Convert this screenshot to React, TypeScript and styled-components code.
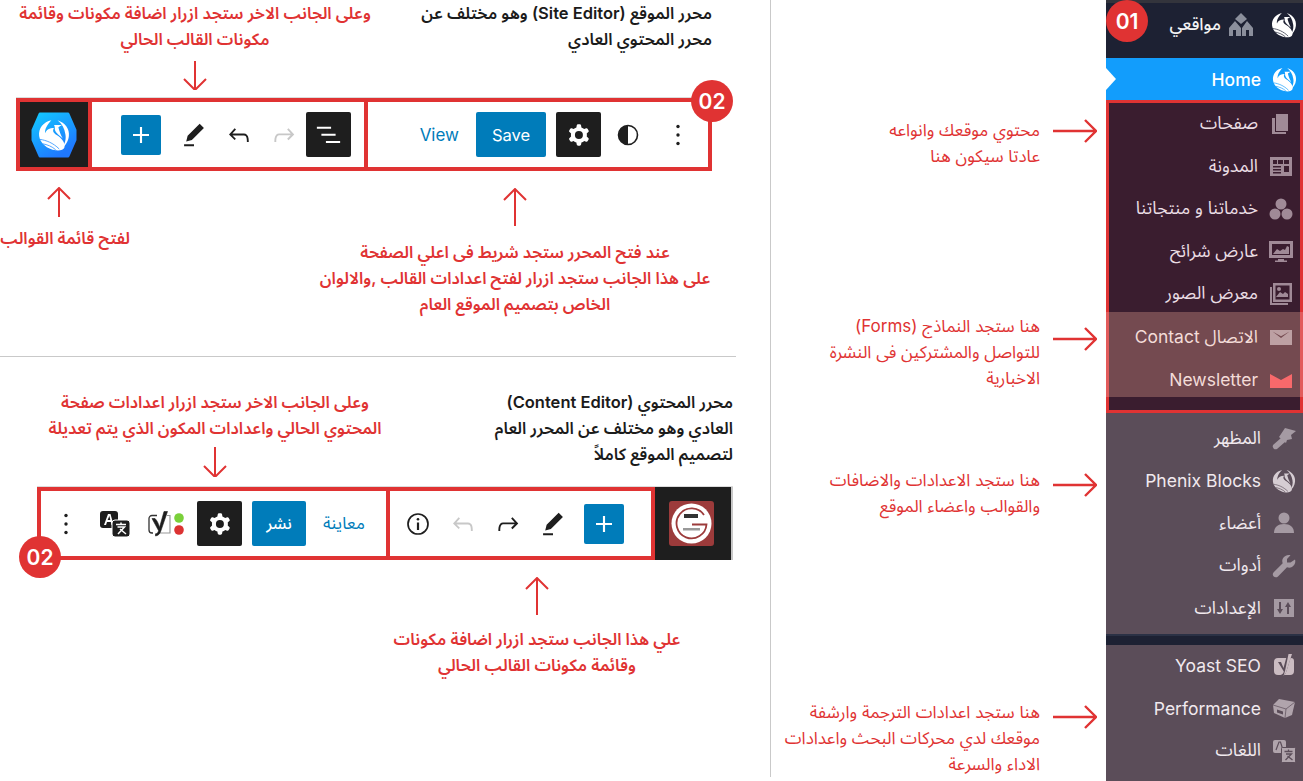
import React, { FC } from "react";
import styled, { createGlobalStyle } from "styled-components";

const RED = "#e03333";
const BLUE = "#007cba";
const DARK = "#1e1e1e";
const FONT = `"Inter", "Noto Sans Arabic", "DejaVu Sans", sans-serif`;

const GlobalStyle = createGlobalStyle`
  html, body {
    margin: 0;
    padding: 0;
    background: #fff;
  }
  body {
    font-family: ${FONT};
  }
`;

/* drawings */

const WpIcon: FC<{ d: string; color?: string; size?: number }> = ({ d, color = DARK, size = 30 }) => (
  <svg width={size} height={size} viewBox="0 0 24 24" fill={color} fillRule="evenodd">
    <path d={d} />
  </svg>
);

const PEN = "m19 7-3-3-8.5 8.5-1 4 4-1L19 7Zm-7 11.5H5V20h7v-1.5Z";
const UNDO =
  "M18.3 11.7c-.6-.6-1.4-.9-2.3-.9H6.7l2.9-3.3-1.1-1-4.5 5L8.5 16l1-1-2.7-2.7H16c.5 0 .9.2 1.3.5 1 1 1 3.4 1 4.5v.3h1.5v-.2c0-1.5 0-4.3-1.5-5.7z";
const REDO =
  "M15.6 6.5l-1.1 1 2.9 3.3H8c-.9 0-1.7.3-2.3.9-1.4 1.5-1.4 4.2-1.4 5.6v.2h1.5v-.3c0-1.1 0-3.5 1-4.5.3-.3.7-.5 1.3-.5h9.2L14.5 15l1.1 1.1 4.6-4.6-4.6-5z";
const LIST = "M3 6h11v1.5H3V6Zm3.5 5.5h11V13h-11v-1.5ZM21 17H10v1.5h11V17Z";
const PLUS = "M18 11.2h-5.2V6h-1.6v5.2H6v1.6h5.2V18h1.6v-5.2H18z";
const COG =
  "M10.289 4.836A1 1 0 0 1 11.275 4h1.306a1 1 0 0 1 .987.836l.244 1.466c.787.26 1.503.679 2.108 1.218l1.393-.522a1 1 0 0 1 1.216.437l.653 1.13a1 1 0 0 1-.23 1.273l-1.148.944a6.025 6.025 0 0 1 0 2.435l1.149.946a1 1 0 0 1 .23 1.272l-.653 1.13a1 1 0 0 1-1.216.437l-1.394-.522c-.605.54-1.32.958-2.108 1.218l-.244 1.466a1 1 0 0 1-.987.836h-1.306a1 1 0 0 1-.986-.836l-.244-1.466a5.995 5.995 0 0 1-2.108-1.218l-1.394.522a1 1 0 0 1-1.217-.436l-.653-1.131a1 1 0 0 1 .23-1.272l1.149-.946a6.026 6.026 0 0 1 0-2.435l-1.148-.944a1 1 0 0 1-.23-1.272l.653-1.131a1 1 0 0 1 1.217-.437l1.393.522a5.994 5.994 0 0 1 2.108-1.218l.244-1.466ZM14.929 12a3 3 0 1 1-6 0 3 3 0 0 1 6 0Z";

const MoreDots: FC = () => (
  <svg width="30" height="30" viewBox="0 0 30 30" fill={DARK}>
    <circle cx="15" cy="6.500" r="1.700" />
    <circle cx="15" cy="15" r="1.700" />
    <circle cx="15" cy="23.500" r="1.700" />
  </svg>
);

const HalfCircle: FC = () => (
  <svg width="24" height="24" viewBox="0 0 24 24">
    <circle cx="12" cy="12" r="9.500" fill="#fff" stroke={DARK} strokeWidth="1.600" />
    <path d="M12 2.500a9.500 9.500 0 0 0 0 19Z" fill={DARK} />
  </svg>
);

const InfoIcon: FC = () => (
  <svg width="24" height="24" viewBox="0 0 24 24" fill="none" stroke={DARK}>
    <circle cx="12" cy="12" r="10" strokeWidth="1.700" />
    <path d="M12 10.500V18" strokeWidth="2.200" />
    <circle cx="12" cy="7.200" r="1.300" fill={DARK} stroke="none" />
  </svg>
);

const TranslateDark: FC = () => (
  <svg width="32" height="28" viewBox="0 0 32 28">
    <rect x="1" y="1" width="18" height="17" rx="3" fill={DARK} />
    <path d="M5 15 9 4h2.500l3 11h-2l-.7-3H8l-1 3Zm3.600-5h2.700l-.9-4Z" fill="#fff" />
    <rect x="13" y="10" width="18" height="17" rx="3" fill={DARK} stroke="#fff" />
    <path d="M17 14.500h10M22 12.500v2M18.500 17h7L19 24M21 19l6 5" stroke="#fff" strokeWidth="1.500" fill="none" />
  </svg>
);

const YoastStatus: FC = () => (
  <svg width="38" height="26" viewBox="0 0 38 26" fill="none">
    <path d="M9 4.500H4a3 3 0 0 0-3 3V19a3 3 0 0 0 3 3h1" stroke="#333" strokeWidth="1.300" />
    <path d="M19 4.500h3V22H11" stroke="#999" strokeWidth="1.200" />
    <path
      d="M7 7.500c2 2 3.500 5 4.500 9L16 .5h3.500L12.800 20c-.9 3-2.500 4.500-5.300 5v-2.200c2-.3 2.800-1.500 3-3.300L4 7.500Z"
      fill={DARK}
      stroke={DARK}
      strokeWidth="0.600"
    />
    <circle cx="31" cy="7" r="4.800" fill="#7ad03a" />
    <circle cx="31" cy="19" r="4.800" fill="#dc3232" />
  </svg>
);

const PhoenixMark: FC<{ size: number; color?: string; cut?: string; x?: number; y?: number }> = ({
  size,
  color = "#fff",
  cut = "#1d2133",
  x,
  y,
}) => (
  <svg x={x} y={y} width={size} height={size} viewBox="0 0 40 40">
    <path
      d="M17 3C8 5 2 12 3 21c1 8 9 15 19 16.500 5 .5 9-.5 10-3.500 1-6-4-11-9-14-4-2.500-5-5-3-8-5 0-9 2-10 6-1-4 2-10 7-15Z"
      fill={color}
    />
    <path d="M24 3c9 3 14 10 13 18-.5 6-4 11-9 15.500 5-6.500 6-12.500 5-17.500-1-7-4-12-9-16Z" fill={color} />
    <path d="M20 8.500h9l-4 2.500c1 4 2 7 5 13-3-3-8-6-9-10 0-2 0-4-1-5.500Z" fill={color} />
    <path d="M4 25c7 1 15 4 22 11M7 30c5 1 11 3 15 7" stroke={cut} strokeWidth="1" fill="none" />
  </svg>
);

const HexLogo: FC = () => (
  <svg width="46" height="46" viewBox="0 0 46 46">
    <defs>
      <linearGradient id="hexFill" x1="0" y1="0" x2="0.6" y2="1">
        <stop offset="0" stopColor="#12c9ff" />
        <stop offset="1" stopColor="#1f78ff" />
      </linearGradient>
    </defs>
    <path
      d="M9 2h28l7 16v10l-7 16H9L2 28V18Z"
      fill="url(#hexFill)"
      stroke="url(#hexFill)"
      strokeWidth="3"
      strokeLinejoin="round"
    />
    <PhoenixMark size={35} x={5.500} y={5.500} cut="#3f9cff" />
  </svg>
);

const BrandBadge: FC = () => (
  <svg width="45" height="45" viewBox="0 0 45 45">
    <rect width="45" height="45" rx="3" fill="#9c3b3b" />
    <circle cx="22.500" cy="22.500" r="20" fill="#fff" />
    <path d="M35 14a15 15 0 1 0 2.500 9.500H23" fill="none" stroke="#9c3b3b" strokeWidth="1.800" />
    <rect x="15" y="13" width="14" height="4" fill="#333" />
    <rect x="14" y="27" width="17" height="2.500" fill="#999" />
  </svg>
);

const Arrow: FC<{ dir: "up" | "down" | "right"; length: number }> = ({ dir, length }) => {
  if (dir === "right") {
    return (
      <svg width={length} height="24" viewBox={`0 0 ${length} 24`} fill="none" stroke={RED} strokeWidth="2.400">
        <path d={`M0 12H${length - 1}M${length - 12} 1l11 11-11 11`} />
      </svg>
    );
  }
  const path =
    dir === "down"
      ? `M12 0V${length - 1}M1 ${length - 11}l11 11 11-11`
      : `M12 ${length}V1M1 12 12 1l11 11`;
  return (
    <svg width="24" height={length} viewBox={`0 0 24 ${length}`} fill="none" stroke={RED} strokeWidth="2">
      <path d={path} />
    </svg>
  );
};

/* sidebar icons */

const Glyph: FC<{ color: string; children: React.ReactNode }> = ({ color, children }) => (
  <svg width="24" height="24" viewBox="0 0 24 24" fill={color}>
    {children}
  </svg>
);

const icons: Record<string, (c: string) => React.ReactNode> = {
  pages: (c) => (
    <Glyph color={c}>
      <path d="M7 2h12v17H7z" />
      <path d="M3 6h3v14h11v2H3z" />
    </Glyph>
  ),
  blog: (c) => (
    <Glyph color={c}>
      <path
        fillRule="evenodd"
        d="M1 3h22v19H1ZM4 6v4h4V6Zm5 0v4h5V6Zm6 0v4h5V6ZM4 12v1.500h8V12Zm0 3v1.500h8V15Zm0 3v1.500h8V18Zm11-6v6h5v-6Z"
      />
    </Glyph>
  ),
  services: (c) => (
    <Glyph color={c}>
      <circle cx="12" cy="7" r="5.500" />
      <circle cx="6" cy="17" r="5.500" />
      <circle cx="18" cy="17" r="5.500" />
    </Glyph>
  ),
  slider: (c) => (
    <Glyph color={c}>
      <path fillRule="evenodd" d="M0 2h24v17H0Zm3 3v11h18V5ZM9 20h6v1.500h3V23H6v-1.500h3Z" />
      <path d="M4 15l4-5 3 2 3-2 2 1 2-4 2 1v7Z" />
    </Glyph>
  ),
  gallery: (c) => (
    <Glyph color={c}>
      <path fillRule="evenodd" d="M4 1h19v19H4Zm2.500 2.500v14h14v-14Z" />
      <path d="M7 15l4-5 3 2 2-2 3 2v3Z" />
      <circle cx="10" cy="7" r="2" />
      <path d="M1 5h2v16h16v2H1Z" />
    </Glyph>
  ),
  mail: (c) => (
    <Glyph color={c}>
      <path fillRule="evenodd" d="M1 5h22v15H1Zm2.500 1.500L12 13l8.500-6.500L12 11.200Z" />
    </Glyph>
  ),
  letter: (c) => (
    <Glyph color={c}>
      <path d="M1 6l11 6 11-6v14H1Z" />
    </Glyph>
  ),
  brush: (c) => (
    <Glyph color={c}>
      <path d="M13 2l11 3-5 4 1 4-5 1-1 3-7-6ZM9 12l4 4-8 7a3 3 0 0 1-4-4Z" />
    </Glyph>
  ),
  user: (c) => (
    <Glyph color={c}>
      <circle cx="12" cy="7" r="5.500" />
      <path d="M2 22c0-6 4-9 10-9s10 3 10 9Z" />
    </Glyph>
  ),
  wrench: (c) => (
    <Glyph color={c}>
      <path d="M23 5.500c1 3-.5 6-3 7.500-2 1-3.500.8-5 .3L6 22.500c-1.500 1.300-3.500 1-4.500-.3-1-1.200-1-3 .2-4l9-9c-.6-1.500-.7-3.200.3-5C12.300 2 15.300.5 18.500 1.200L15 5v3.500h3.500Z" />
    </Glyph>
  ),
  settings: (c) => (
    <Glyph color={c}>
      <path fillRule="evenodd" d="M2 3h20v18H2Zm5 3v7H5l3 5 3-5H9V6Zm8 12h2v-7h2l-3-5-3 5h2Z" />
    </Glyph>
  ),
  yoast: (c) => (
    <Glyph color={c}>
      <path d="M6 4h13a3 3 0 0 1 3 3v10a4 4 0 0 1-4 4H6a4 4 0 0 1-4-4V8a4 4 0 0 1 4-4Z" />
      <path
        d="M6 8l3 0 2.500 6L15 1h4.500l-5 16c-.8 3-2.500 5.500-6 6.500v-2.500c2-.5 3-1.500 3.300-3.500Z"
        fill="#5b4d59"
      />
      <path d="M16.500 0H20l-5.500 17c-.5 2-1.500 3.500-3 5l1.500-5Z" fill={c} />
    </Glyph>
  ),
  performance: (c) => (
    <Glyph color={c}>
      <path d="M7 3l16 3-3 13-7 3-11-5L1 9Z" />
      <path d="M1 9l13 4 9-7M14 13l-1 9" stroke="#5b4d59" strokeWidth="0.700" fill="none" />
      <path d="M5 13.500l6 2v3l-6-2Z" fill="#5b4d59" />
    </Glyph>
  ),
  languages: (c) => (
    <Glyph color={c}>
      <rect x="1" y="1" width="13" height="13" rx="2" />
      <path d="M4 11l3-8h1.500l2.500 8" stroke="#5b4d59" strokeWidth="1.200" fill="none" />
      <rect x="9.500" y="8.500" width="14" height="15" rx="1" stroke="#5b4d59" strokeWidth="1" />
      <path d="M12.500 12.500h8M16.500 10.500v2M14 15h5.500L13.500 21M15.500 17l5 4" stroke="#5b4d59" strokeWidth="1.300" fill="none" />
    </Glyph>
  ),
  houses: (c) => (
    <Glyph color={c}>
      <path d="M12 0l6 6-6 5-6-5Z" />
      <path fillRule="evenodd" d="M6 8l6 7v8H0v-8Zm12 0l6 7v8H13v-8ZM4 17v6h3v-6Zm13 0v6h3v-6Z" />
    </Glyph>
  ),
};

interface MenuItem {
  label: string;
  icon: string;
  tint?: string;
}

const sidebarGroups: Record<string, MenuItem[]> = {
  content: [
    { label: "صفحات", icon: "pages" },
    { label: "المدونة", icon: "blog" },
    { label: "خدماتنا و منتجاتنا", icon: "services" },
    { label: "عارض شرائح", icon: "slider" },
    { label: "معرض الصور", icon: "gallery" },
  ],
  forms: [
    { label: "الاتصال Contact", icon: "mail", tint: "#bda0a3" },
    { label: "Newsletter", icon: "letter", tint: "#f8696b" },
  ],
  admin: [
    { label: "المظهر", icon: "brush" },
    { label: "Phenix Blocks", icon: "phenix" },
    { label: "أعضاء", icon: "user" },
    { label: "أدوات", icon: "wrench" },
    { label: "الإعدادات", icon: "settings" },
  ],
  extras: [
    { label: "Yoast SEO", icon: "yoast", tint: "#cbbcc2" },
    { label: "Performance", icon: "performance" },
    { label: "اللغات", icon: "languages" },
  ],
};

const MenuList: FC<{ items: MenuItem[]; iconColor: string; textColor: string }> = ({
  items,
  iconColor,
  textColor,
}) => (
  <>
    {items.map((item) => (
      <MenuRow key={item.label} $color={textColor}>
        <bdi>{item.label}</bdi>
        <IconSlot>
          {item.icon === "phenix" ? (
            <PhoenixMark size={26} color="#d6cdd3" cut="#5b4d59" />
          ) : (
            icons[item.icon](item.tint ?? iconColor)
          )}
        </IconSlot>
      </MenuRow>
    ))}
  </>
);

const App: FC = () => (
  <Page>
    <GlobalStyle />
    <GuidePanel>
      <TopNotes>
        <ArrowNote $width={352} $left={19}>
          <Note $tone="red">
            <Line>وعلى الجانب الاخر ستجد ازرار اضافة مكونات وقائمة</Line>
            <Line>مكونات القالب الحالي</Line>
          </Note>
          <ArrowGap $top={9}>
            <Arrow dir="down" length={29} />
          </ArrowGap>
        </ArrowNote>
        <SideNote $right={58}>
          <Note $tone="ink" $align="right">
            <Line>محرر الموقع (Site Editor) وهو مختلف عن</Line>
            <Line>محرر المحتوي العادي</Line>
          </Note>
        </SideNote>
      </TopNotes>

      <EditorBar $left={16} $width={696}>
        <LogoSegment $width={76}>
          <HexLogo />
        </LogoSegment>
        <BarSegment $width={280} $left={-4} $padLeft={29}>
          <AddButton>
            <WpIcon d={PLUS} color="#fff" size={32} />
          </AddButton>
          <ToolButton>
            <WpIcon d={PEN} size={34} />
          </ToolButton>
          <ToolButton>
            <WpIcon d={UNDO} />
          </ToolButton>
          <ToolButton>
            <WpIcon d={REDO} color="#c8c8c8" />
          </ToolButton>
          <DarkButton>
            <WpIcon d={LIST} color="#fff" size={31} />
          </DarkButton>
        </BarSegment>
        <BarSegment $width={348} $left={-4} $end>
          <TextLink>View</TextLink>
          <SaveButton>Save</SaveButton>
          <DarkButton $left={10}>
            <WpIcon d={COG} color="#fff" size={32} />
          </DarkButton>
          <ToolButton $left={4}>
            <HalfCircle />
          </ToolButton>
          <ToolButton $left={5}>
            <MoreDots />
          </ToolButton>
        </BarSegment>
        <StepBadge $x={675} $y={-18}>02</StepBadge>
      </EditorBar>

      <BelowBar $height={185}>
        <ArrowNote $width={130}>
          <ArrowGap $top={16} $right={12}>
            <Arrow dir="up" length={30} />
          </ArrowGap>
          <Note $tone="red" $top={8}>
            <Line>لفتح قائمة القوالب</Line>
          </Note>
        </ArrowNote>
        <ArrowNote $width={420} $left={175}>
          <ArrowGap $top={17}>
            <Arrow dir="up" length={38} />
          </ArrowGap>
          <Note $tone="red" $top={13}>
            <Line>عند فتح المحرر ستجد شريط فى اعلي الصفحة</Line>
            <Line>على هذا الجانب ستجد ازرار لفتح اعدادات القالب ,والالوان</Line>
            <Line>الخاص بتصميم الموقع العام</Line>
          </Note>
        </ArrowNote>
      </BelowBar>

      <SectionRule />

      <LowerNotes>
        <ArrowNote $width={380} $left={25}>
          <Note $tone="red">
            <Line>وعلى الجانب الاخر ستجد ازرار اعدادات صفحة</Line>
            <Line>المحتوي الحالي واعدادات المكون الذي يتم تعديلة</Line>
          </Note>
          <ArrowGap $top={6}>
            <Arrow dir="down" length={30} />
          </ArrowGap>
        </ArrowNote>
        <SideNote $right={37}>
          <Note $tone="ink" $align="right">
            <Line>محرر المحتوي (Content Editor)</Line>
            <Line>العادي وهو مختلف عن المحرر العام</Line>
            <Line>لتصميم الموقع كاملاً</Line>
          </Note>
        </SideNote>
      </LowerNotes>

      <EditorBar $left={37} $width={696}>
        <BarSegment $width={353} $padLeft={2}>
          <ToolButton>
            <MoreDots />
          </ToolButton>
          <ToolButton $left={4}>
            <TranslateDark />
          </ToolButton>
          <YoastSlot>
            <YoastStatus />
          </YoastSlot>
          <DarkButton $left={8}>
            <WpIcon d={COG} color="#fff" size={32} />
          </DarkButton>
          <PublishButton>نشر</PublishButton>
          <ArabicLink>معاينة</ArabicLink>
        </BarSegment>
        <BarSegment $width={269} $left={-4} $padLeft={5}>
          <ToolButton>
            <InfoIcon />
          </ToolButton>
          <ToolButton>
            <WpIcon d={UNDO} color="#c8c8c8" />
          </ToolButton>
          <ToolButton>
            <WpIcon d={REDO} />
          </ToolButton>
          <ToolButton>
            <WpIcon d={PEN} size={34} />
          </ToolButton>
          <AddButton $left={9}>
            <WpIcon d={PLUS} color="#fff" size={32} />
          </AddButton>
        </BarSegment>
        <BrandSegment>
          <BrandBadge />
        </BrandSegment>
        <StepBadge $x={-18} $y={49}>02</StepBadge>
      </EditorBar>

      <BelowBar $height={130}>
        <ArrowNote $width={360} $left={357}>
          <ArrowGap $top={17}>
            <Arrow dir="up" length={38} />
          </ArrowGap>
          <Note $tone="red" $top={11}>
            <Line>علي هذا الجانب ستجد ازرار اضافة مكونات</Line>
            <Line>وقائمة مكونات القالب الحالي</Line>
          </Note>
        </ArrowNote>
      </BelowBar>
    </GuidePanel>

    <CalloutColumn>
      <Callout $gap={117}>
        <ThinNote>
          <Line>محتوي موقعك وانواعه</Line>
          <Line>عادتا سيكون هنا</Line>
        </ThinNote>
        <CalloutArrow $top={2}>
          <Arrow dir="right" length={44} />
        </CalloutArrow>
      </Callout>
      <Callout $gap={144}>
        <ThinNote>
          <Line>هنا ستجد النماذج (Forms)</Line>
          <Line>للتواصل والمشتركين فى النشرة</Line>
          <Line>الاخبارية</Line>
        </ThinNote>
        <CalloutArrow $top={14}>
          <Arrow dir="right" length={44} />
        </CalloutArrow>
      </Callout>
      <Callout $gap={76}>
        <ThinNote>
          <Line>هنا ستجد الاعدادات والاضافات</Line>
          <Line>والقوالب واعضاء الموقع</Line>
        </ThinNote>
        <CalloutArrow $top={6}>
          <Arrow dir="right" length={44} />
        </CalloutArrow>
      </Callout>
      <Callout $gap={180}>
        <ThinNote>
          <Line>هنا ستجد اعدادات الترجمة وارشفة</Line>
          <Line>موقعك لدي محركات البحث واعدادات</Line>
          <Line>الاداء والسرعة</Line>
        </ThinNote>
        <CalloutArrow $top={6}>
          <Arrow dir="right" length={44} />
        </CalloutArrow>
      </Callout>
    </CalloutColumn>

    <Sidebar>
      <SiteBar>
        <bdi>مواقعي</bdi>
        <HousesSlot>{icons.houses("#8b8f9c")}</HousesSlot>
        <IconSlot>
          <PhoenixMark size={28} />
        </IconSlot>
        <StepBadge $x={0} $y={-3}>01</StepBadge>
      </SiteBar>
      <HomeRow>
        <bdi>Home</bdi>
        <IconSlot>
          <PhoenixMark size={27} cut="#129dfc" />
        </IconSlot>
      </HomeRow>
      <MarkedBox>
        <ContentRows>
          <MenuList items={sidebarGroups.content} iconColor="#a08a97" textColor="#eadde4" />
        </ContentRows>
        <FormsRows>
          <MenuList items={sidebarGroups.forms} iconColor="#bda0a3" textColor="#f3dcd8" />
        </FormsRows>
      </MarkedBox>
      <AdminRows>
        <MenuList items={sidebarGroups.admin} iconColor="#a59aa3" textColor="#f1e9ee" />
      </AdminRows>
      <SidebarDivider />
      <MenuList items={sidebarGroups.extras} iconColor="#b0a4ac" textColor="#f1e9ee" />
    </Sidebar>
  </Page>
);

export default App;

/* page */

const Page = styled.div`
  display: flex;
  width: 1303px;
  height: 781px;
  overflow: hidden;
  background: #fff;
  font-family: ${FONT};
`;

const GuidePanel = styled.div`
  display: flex;
  flex-direction: column;
  flex: none;
  width: 770px;
  height: 777px;
  border-right: 1px solid #c9c9c9;
`;

const TopNotes = styled.div`
  display: flex;
  align-items: flex-start;
  height: 98px;
`;

const LowerNotes = styled.div`
  display: flex;
  align-items: flex-start;
  height: 130px;
  padding-top: 32px;
  box-sizing: border-box;
`;

const ArrowNote = styled.div<{ $width: number; $left?: number }>`
  display: flex;
  flex-direction: column;
  align-items: center;
  flex: none;
  width: ${(p) => p.$width}px;
  margin-left: ${(p) => p.$left ?? 0}px;
`;

const SideNote = styled.div<{ $right: number }>`
  margin-left: auto;
  margin-right: ${(p) => p.$right}px;
`;

const Note = styled.div<{ $tone: "red" | "ink"; $align?: string; $top?: number }>`
  direction: rtl;
  margin-top: ${(p) => p.$top ?? 0}px;
  font-size: 16.5px;
  font-weight: 600;
  line-height: 26px;
  white-space: nowrap;
  text-align: ${(p) => p.$align ?? "center"};
  color: ${(p) => (p.$tone === "red" ? RED : "#1b1b1b")};
`;

const Line = styled.div`
  height: 26px;
`;

const ArrowGap = styled.div<{ $top: number; $right?: number }>`
  display: flex;
  margin-top: ${(p) => p.$top}px;
  margin-right: ${(p) => p.$right ?? 0}px;
`;

const BelowBar = styled.div<{ $height: number }>`
  display: flex;
  align-items: flex-start;
  flex: none;
  height: ${(p) => p.$height}px;
`;

const SectionRule = styled.div`
  flex: none;
  width: 736px;
  height: 1px;
  background: #c9c9c9;
`;

/* editor toolbars */

const EditorBar = styled.div<{ $left: number; $width: number }>`
  position: relative;
  display: flex;
  flex: none;
  width: ${(p) => p.$width}px;
  height: 73px;
  margin-left: ${(p) => p.$left}px;
  box-shadow: 0 -1px 0 #dcdcdc;
`;

const LogoSegment = styled.div<{ $width: number }>`
  display: flex;
  align-items: center;
  justify-content: center;
  flex: none;
  box-sizing: border-box;
  width: ${(p) => p.$width}px;
  background: ${DARK};
  border: 4px solid ${RED};
`;

const BarSegment = styled.div<{ $width: number; $left?: number; $padLeft?: number; $end?: boolean }>`
  display: flex;
  align-items: center;
  justify-content: ${(p) => (p.$end ? "flex-end" : "flex-start")};
  flex: none;
  box-sizing: border-box;
  width: ${(p) => p.$width}px;
  margin-left: ${(p) => p.$left ?? 0}px;
  padding-left: ${(p) => p.$padLeft ?? 0}px;
  padding-right: ${(p) => (p.$end ? 8 : 0)}px;
  border: 4px solid ${RED};
`;

const BrandSegment = styled.div`
  display: flex;
  align-items: center;
  flex: none;
  box-sizing: border-box;
  width: 78px;
  padding-left: 14px;
  background: ${DARK};
  border-right: 2px solid #c8c8c8;
`;

const ToolButton = styled.div<{ $left?: number }>`
  display: flex;
  align-items: center;
  justify-content: center;
  flex: none;
  width: 45px;
  height: 45px;
  margin-left: ${(p) => p.$left ?? 0}px;
`;

const YoastSlot = styled.div`
  display: flex;
  align-items: center;
  justify-content: center;
  flex: none;
  width: 44px;
  height: 45px;
  margin-left: 8px;
`;

const DarkButton = styled(ToolButton)`
  background: ${DARK};
  border-radius: 2px;
`;

const AddButton = styled.div<{ $left?: number }>`
  display: flex;
  align-items: center;
  justify-content: center;
  flex: none;
  width: 40px;
  height: 40px;
  margin-left: ${(p) => p.$left ?? 0}px;
  margin-right: ${(p) => (p.$left ? 0 : 10)}px;
  background: ${BLUE};
  border-radius: 2px;
`;

const SaveButton = styled.div`
  display: flex;
  align-items: center;
  justify-content: center;
  flex: none;
  width: 70px;
  height: 45px;
  margin-left: 17px;
  background: ${BLUE};
  border-radius: 2px;
  color: #fff;
  font-size: 16.500px;
  font-weight: 400;
`;

const PublishButton = styled(SaveButton)`
  width: 54px;
  margin-left: 10px;
  font-size: 16px;
  font-weight: 500;
`;

const TextLink = styled.div`
  flex: none;
  color: ${BLUE};
  font-size: 17px;
  font-weight: 400;
`;

const ArabicLink = styled(TextLink)`
  direction: rtl;
  margin-left: 17px;
`;

const StepBadge = styled.div<{ $x: number; $y: number }>`
  position: absolute;
  left: ${(p) => p.$x}px;
  top: ${(p) => p.$y}px;
  display: flex;
  align-items: center;
  justify-content: center;
  width: 42px;
  height: 42px;
  border-radius: 50%;
  background: ${RED};
  color: #fff;
  font-size: 21px;
  font-weight: 600;
`;

/* middle annotations */

const CalloutColumn = styled.div`
  display: flex;
  flex-direction: column;
  flex: none;
  width: 335px;
  height: 781px;
`;

const Callout = styled.div<{ $gap: number }>`
  display: flex;
  justify-content: flex-end;
  align-items: flex-start;
  gap: 13px;
  margin-top: ${(p) => p.$gap}px;
  padding-right: 9px;
`;

const ThinNote = styled.div`
  direction: rtl;
  font-size: 17px;
  font-weight: 400;
  line-height: 26px;
  white-space: nowrap;
  color: ${RED};
`;

const CalloutArrow = styled.div<{ $top: number }>`
  display: flex;
  margin-top: ${(p) => p.$top}px;
`;

/* wordpress sidebar */

const Sidebar = styled.div`
  display: flex;
  flex-direction: column;
  flex: none;
  width: 197px;
  height: 781px;
  background: #5b4d59;
`;

const MenuRow = styled.div<{ $color: string }>`
  display: flex;
  align-items: center;
  justify-content: flex-end;
  flex: none;
  gap: 8px;
  height: 42.500px;
  padding-right: 4px;
  color: ${(p) => p.$color};
  font-size: 17.500px;
  white-space: nowrap;
`;

const IconSlot = styled.div`
  display: flex;
  align-items: center;
  justify-content: center;
  flex: none;
  width: 30px;
`;

const HousesSlot = styled.div`
  display: flex;
  margin-left: 8px;
  margin-right: 16px;
`;

const SiteBar = styled.div`
  position: relative;
  display: flex;
  align-items: center;
  justify-content: flex-end;
  flex: none;
  box-sizing: border-box;
  height: 58px;
  padding: 0 4px 12px 0;
  background: #1d2133;
  border-top: 3px solid #33343c;
  color: #f3f3f3;
  font-size: 17px;
  font-weight: 500;
`;

const HomeRow = styled.div`
  position: relative;
  display: flex;
  align-items: center;
  justify-content: flex-end;
  flex: none;
  gap: 8px;
  height: 42px;
  padding-right: 4px;
  background: #129dfc;
  color: #fff;
  font-size: 17.500px;
  font-weight: 500;

  &::before {
    content: "";
    position: absolute;
    left: 0;
    top: 10px;
    border-left: 10px solid #fff;
    border-top: 11px solid transparent;
    border-bottom: 11px solid transparent;
  }
`;

const MarkedBox = styled.div`
  display: flex;
  flex-direction: column;
  flex: none;
  box-sizing: border-box;
  height: 313px;
  background: #3a1d2f;
  border: 3px solid ${RED};
`;

const ContentRows = styled.div`
  display: flex;
  flex-direction: column;
  justify-content: center;
  flex: none;
  box-sizing: border-box;
  height: 209px;
  padding-top: 2px;
`;

const FormsRows = styled.div`
  display: flex;
  flex-direction: column;
  justify-content: center;
  flex: none;
  box-sizing: border-box;
  height: 85px;
  margin: 0 -3px;
  padding-top: 8px;
  background: #744a50;
  border-left: 3px solid #e25b5b;
  border-right: 3px solid #e25b5b;
`;

const AdminRows = styled.div`
  display: flex;
  flex-direction: column;
  flex: none;
  margin-top: 4px;
`;

const SidebarDivider = styled.div`
  flex: none;
  height: 11px;
  margin-top: 4px;
  background: #1d2133;
  border-top: 2px solid #2b3145;
  box-sizing: border-box;
`;
